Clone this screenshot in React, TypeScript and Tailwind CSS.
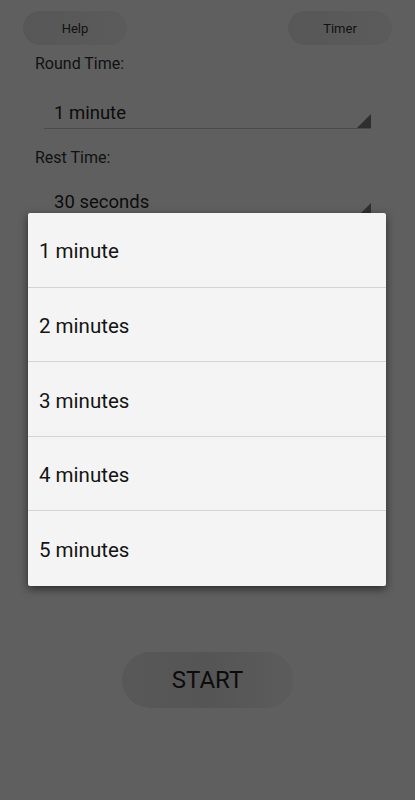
import React from 'react'

const OPTIONS = ['1 minute', '2 minutes', '3 minutes', '4 minutes', '5 minutes']

function Spinner({ value, top }: { value: string; top: string }) {
  return (
    <div className={`relative mx-[9px] h-[39px] border-b border-[#4a4a4a] ${top}`}>
      <span className="absolute left-[10px] top-[12px] text-[18.5px] leading-[22px] text-[#0c0c0c]">
        {value}
      </span>
      <svg
        className="absolute bottom-0 right-0"
        width="14"
        height="14"
        viewBox="0 0 14 14"
      >
        <polygon points="14,0 14,14 0,14" fill="#2f2f2f" />
      </svg>
    </div>
  )
}

export default function App() {
  return (
    <div
      className="relative h-[800px] w-[415px] overflow-hidden bg-[#5f5f5f]"
      style={{ fontFamily: 'Roboto, "Noto Sans", sans-serif' }}
    >
      <div className="flex justify-between px-[23px] pt-[11px]">
        <button className="h-[34px] w-[104px] rounded-full bg-gradient-to-r from-[#575757] to-[#5b5b5b] pt-[2px] text-[13px] text-[#111]">
          Help
        </button>
        <button className="h-[34px] w-[104px] rounded-full bg-gradient-to-r from-[#575757] to-[#5b5b5b] pt-[2px] text-[13px] text-[#111]">
          Timer
        </button>
      </div>

      <div className="px-[35px]">
        <p className="mt-[9px] text-[16px] leading-[20px] text-[#111]">Round Time:</p>
        <Spinner value="1 minute" top="mt-[16px]" />
        <p className="mt-[19px] text-[16px] leading-[20px] text-[#111]">Rest Time:</p>
        <Spinner value="30 seconds" top="mt-[11px]" />
      </div>

      <div className="mt-[434px] flex justify-center">
        <button className="h-[56px] w-[172px] rounded-full bg-gradient-to-r from-[#585858] via-[#555555] to-[#5c5c5c] text-[24px] text-[#0c0c0c]">
          START
        </button>
      </div>

      <div className="absolute left-[28px] top-[213px] w-[358px] rounded-[2px] bg-[#f4f4f4] shadow-[0_3px_8px_rgba(0,0,0,0.55)]">
        {OPTIONS.map((opt, i) => (
          <div
            key={opt}
            className={`flex h-[74.6px] items-center pl-[11px] pt-[4px] text-[20.5px] text-[#141414] ${
              i < OPTIONS.length - 1 ? 'border-b border-[#d4d4d4]' : ''
            }`}
          >
            {opt}
          </div>
        ))}
      </div>
    </div>
  )
}
